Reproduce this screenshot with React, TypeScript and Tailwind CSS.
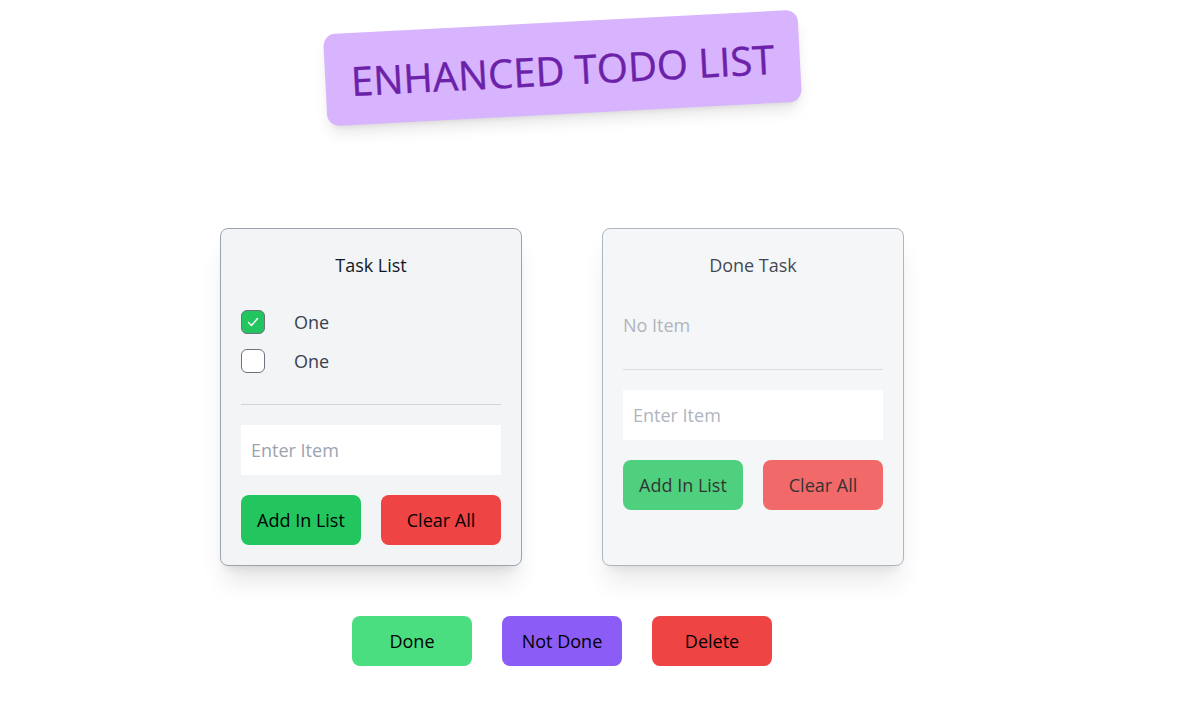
import React, { useState } from 'react';

type Item = { id: number; text: string; checked: boolean };

const font = { fontFamily: '"Segoe UI", "Open Sans", "Noto Sans", sans-serif' };

const CheckBox: React.FC<{ checked: boolean; onChange: () => void }> = ({ checked, onChange }) => (
  <button
    onClick={onChange}
    className={`w-6 h-6 rounded-md border border-[#6b7280] flex items-center justify-center shrink-0 ${
      checked ? 'bg-[#22c55e]' : 'bg-white'
    }`}
  >
    {checked && (
      <svg viewBox="0 0 16 16" className="w-4 h-4" fill="none" stroke="white" strokeWidth={1.4}>
        <path d="M3.5 8.5l3 3 6-7" strokeLinecap="round" strokeLinejoin="round" />
      </svg>
    )}
  </button>
);

export default function App() {
  const [tasks, setTasks] = useState<Item[]>([
    { id: 1, text: 'One', checked: true },
    { id: 2, text: 'One', checked: false },
  ]);
  const [done] = useState<Item[]>([]);

  const toggle = (id: number) =>
    setTasks((t) => t.map((x) => (x.id === id ? { ...x, checked: !x.checked } : x)));

  return (
    <div className="min-h-screen bg-white flex flex-col items-center pt-[22px] pr-[58px]" style={font}>
      {/* Heading */}
      <div className="-rotate-3 bg-[#d8b4fe] rounded-xl shadow-lg w-[475px] h-[92px] flex items-center justify-center">
        <h1 className="text-[40px] text-[#6b21a8] pt-1 [-webkit-text-stroke:0.4px_#6b21a8]">ENHANCED TODO LIST</h1>
      </div>

      {/* Cards */}
      <div className="flex gap-20 mt-[114px]">
        <div className="w-[302px] bg-[#f3f4f6] border border-[#9ca3af] rounded-lg shadow-xl p-5">
          <h2 className="text-lg text-center text-gray-900 mt-[2px]">Task List</h2>
          <ul className="mt-[29px] space-y-[11px]">
            {tasks.map((t) => (
              <li key={t.id} className="flex items-center gap-[29px]">
                <CheckBox checked={t.checked} onChange={() => toggle(t.id)} />
                <span className="text-lg text-[#374151]">{t.text}</span>
              </li>
            ))}
          </ul>
          <hr className="mt-[29px] border-[#d1d5db]" />
          <input
            placeholder="Enter Item"
            className="mt-5 w-full h-[50px] bg-white px-2.5 text-lg outline-none placeholder:text-[#9ca3af]"
          />
          <div className="mt-5 flex justify-between">
            <button className="w-[120px] h-[50px] rounded-lg bg-[#22c55e] text-lg text-black">Add In List</button>
            <button className="w-[120px] h-[50px] rounded-lg bg-[#ef4444] text-lg text-black">Clear All</button>
          </div>
        </div>

        <div className="w-[302px] bg-[#f3f4f6] border border-[#9ca3af] rounded-lg shadow-xl p-5 opacity-80">
          <h2 className="text-lg text-center text-gray-900 mt-[2px]">Done Task</h2>
          {done.length === 0 && <p className="mt-8 text-lg text-[#9ca3af]">No Item</p>}
          <hr className="mt-[30px] border-[#d1d5db]" />
          <input
            placeholder="Enter Item"
            className="mt-5 w-full h-[50px] bg-white px-2.5 text-lg outline-none placeholder:text-[#9ca3af]"
          />
          <div className="mt-5 flex justify-between">
            <button className="w-[120px] h-[50px] rounded-lg bg-[#22c55e] text-lg text-black">Add In List</button>
            <button className="w-[120px] h-[50px] rounded-lg bg-[#ef4444] text-lg text-black">Clear All</button>
          </div>
        </div>
      </div>

      {/* Actions */}
      <div className="flex gap-[30px] mt-[50px]">
        <button className="w-[120px] h-[50px] rounded-lg bg-[#4ade80] text-lg text-black">Done</button>
        <button className="w-[120px] h-[50px] rounded-lg bg-[#8b5cf6] text-lg text-black">Not Done</button>
        <button className="w-[120px] h-[50px] rounded-lg bg-[#ef4444] text-lg text-black">Delete</button>
      </div>
    </div>
  );
}
